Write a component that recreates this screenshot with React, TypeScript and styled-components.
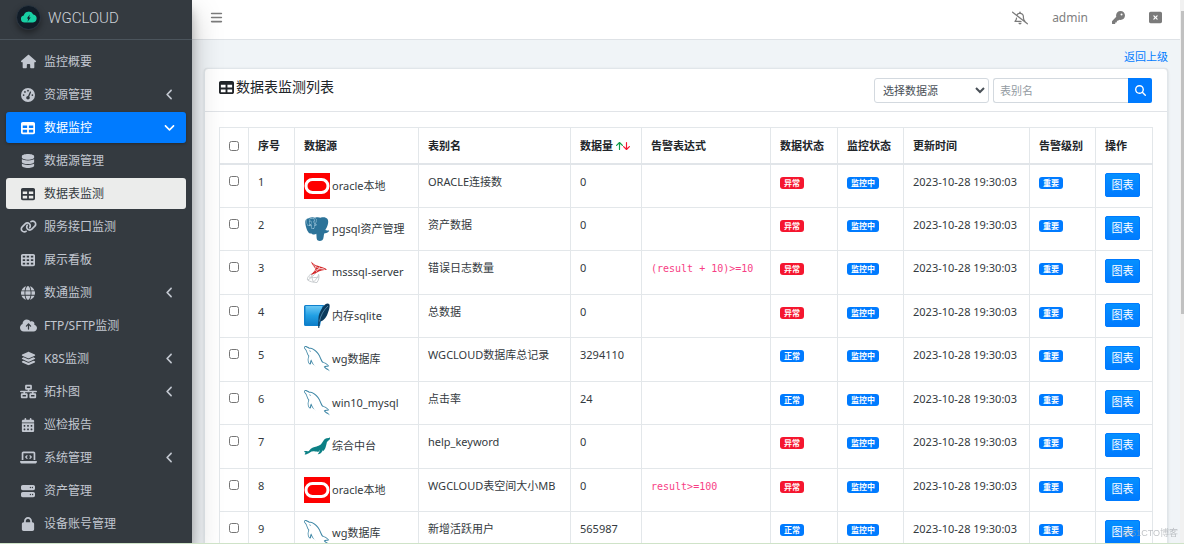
import React from "react";
import styled, { createGlobalStyle, css } from "styled-components";
import type { IconType } from "react-icons";
import {
  FaAngleDown,
  FaAngleLeft,
  FaArrowDown,
  FaArrowUp,
  FaBars,
  FaCalendarDays,
  FaCloudArrowUp,
  FaDatabase,
  FaGaugeHigh,
  FaGlobe,
  FaHouse,
  FaKey,
  FaLaptopCode,
  FaLayerGroup,
  FaLink,
  FaLock,
  FaMagnifyingGlass,
  FaNetworkWired,
  FaRectangleXmark,
  FaRegBellSlash,
  FaServer,
  FaTable,
  FaTableCells,
} from "react-icons/fa6";
import { SiMariadb, SiPostgresql } from "react-icons/si";
import { GrMysql } from "react-icons/gr";

const GlobalStyle = createGlobalStyle`
  *, *::before, *::after { box-sizing: border-box; }
  body {
    margin: 0;
    background: #f0f4f7;
    color: #343a40;
    font-family: "Noto Sans", "Noto Sans CJK SC", sans-serif;
    font-size: 11px;
    line-height: 18px;
  }
  button, input, select { font: inherit; }
  a { color: #007bff; text-decoration: none; }
`;

/* ---------- page frame ---------- */

const Page = styled.div`
  display: grid;
  grid-template-columns: 192px minmax(0, 1fr) 4px;
  grid-template-rows: minmax(0, 1fr) 1px;
  height: 100vh;
  overflow: hidden;
`;

const StatusLine = styled.div`
  grid-column: 1 / -1;
  z-index: 2;
  background: #cfe3c8;
`;

const ScrollTrack = styled.div`
  background: #f1f1f1;
  padding: 11px 0 0 1px;
`;

const ScrollThumb = styled.div`
  height: 57%;
  background: #c1c1c1;
`;

/* ---------- sidebar ---------- */

const Sidebar = styled.aside`
  position: relative;
  z-index: 1;
  overflow: clip;
  overflow-clip-margin: 40px;
  background: #343a40;
  color: #c2c7d0;
  box-shadow: 0 14px 28px rgba(0, 0, 0, 0.25), 0 10px 10px rgba(0, 0, 0, 0.22);
`;

const Brand = styled.a`
  display: flex;
  align-items: center;
  gap: 7px;
  height: 40px;
  padding: 0 16px 4px;
  border-bottom: 1px solid #4b545c;
  color: #ced2d8;
  font-family: Roboto, sans-serif;
  font-size: 15px;
  font-weight: 300;
`;

const BrandMark = styled.svg`
  flex: none;
  border-radius: 50%;
  box-shadow: 0 3px 6px rgba(0, 0, 0, 0.4);
`;

const Menu = styled.ul`
  display: flex;
  flex-direction: column;
  gap: 2px;
  margin: 0;
  padding: 6px;
  list-style: none;
`;

type Tone = "plain" | "active" | "current";

const tones = {
  plain: css`
    color: #c2c7d0;
  `,
  active: css`
    background: #007bff;
    color: #fff;
    box-shadow: 0 1px 3px rgba(0, 0, 0, 0.3);
  `,
  current: css`
    background: #ebeceb;
    color: #343a40;
  `,
};

const MenuLink = styled.a<{ $tone: Tone }>`
  display: grid;
  grid-template-columns: 18px 1fr 12px;
  align-items: center;
  gap: 7px;
  height: 31px;
  padding: 0 11px 0 13px;
  border-radius: 3px;
  font-size: 12px;
  ${({ $tone }) => tones[$tone]}

  & > svg {
    justify-self: center;
  }
`;

/* ---------- main column ---------- */

const Main = styled.main`
  min-width: 0;
  overflow: hidden;
`;

const TopBar = styled.header`
  display: flex;
  align-items: center;
  justify-content: space-between;
  height: 40px;
  padding: 0 18px 4px;
  border-bottom: 1px solid #dee2e6;
  background: #fff;
  color: #808080;
  font-size: 12px;
`;

const TopActions = styled.div`
  display: flex;
  align-items: center;
  gap: 24px;
`;

const IconButton = styled.button`
  display: flex;
  padding: 0;
  border: 0;
  background: none;
  color: #7b7b7b;
`;

const Content = styled.div`
  padding: 8px 12px;
`;

const BackRow = styled.div`
  display: flex;
  justify-content: flex-end;
  padding-bottom: 2px;
`;

const Card = styled.section`
  border: 1px solid #e1e6ea;
  border-radius: 4px;
  background: #fff;
  box-shadow: 0 0 1px rgba(0, 0, 0, 0.1), 0 1px 3px rgba(0, 0, 0, 0.1);
`;

const CardHeader = styled.div`
  display: flex;
  align-items: flex-start;
  justify-content: space-between;
  padding: 9px 15px 8px 14px;
  border-bottom: 1px solid #e1e4e8;
`;

const CardTitle = styled.h1`
  display: flex;
  align-items: center;
  gap: 2px;
  margin: 0;
  color: #212529;
  font-size: 14px;
  font-weight: 400;
`;

const Filters = styled.form`
  display: flex;
  gap: 4px;
`;

const SourceSelect = styled.select`
  width: 115px;
  height: 25px;
  padding: 0 0 0 4px;
  border: 1px solid #d3d9df;
  border-radius: 3px;
  background: #fff;
  color: #495057;
`;

const SearchGroup = styled.div`
  display: flex;
`;

const SearchInput = styled.input`
  width: 135px;
  height: 25px;
  padding: 0 6px;
  border: 1px solid #d3d9df;
  border-right: 0;
  border-radius: 3px 0 0 3px;
  color: #495057;

  &::placeholder {
    color: #939ba2;
  }
`;

const SearchButton = styled.button`
  display: grid;
  place-items: center;
  width: 24px;
  height: 25px;
  padding: 0;
  border: 0;
  border-radius: 0 2px 2px 0;
  background: #007bff;
  color: #fff;
`;

const CardBody = styled.div`
  padding: 15px 16px 15px 14px;
`;

/* ---------- table ---------- */

const DataTable = styled.table`
  width: 100%;
  table-layout: fixed;
  border-collapse: collapse;
  white-space: nowrap;
`;

const HeadCell = styled.th`
  height: 36px;
  padding: 2px 9px 0;
  border: 1px solid #e3e7ea;
  border-bottom: 2px solid #e1e5e9;
  color: #212529;
  font-weight: 700;
  text-align: left;
`;

const BodyRow = styled.tr`
  height: 43px;

  &:nth-child(odd) {
    height: 44px;
  }
`;

const Cell = styled.td`
  padding: 8px 9px;
  border: 1px solid #e3e7ea;
  vertical-align: top;
`;

const Tick = styled.input`
  display: block;
  width: 10px;
  height: 10px;
  margin: 3px 0;
`;

const SortLabel = styled.span`
  display: inline-flex;
  align-items: center;
  gap: 3px;
`;

const SortArrows = styled.span`
  display: inline-flex;

  & > svg {
    width: 7px;
    height: 10px;
  }
`;

const Source = styled.span`
  display: flex;
  align-items: center;
  gap: 2px;

  & > svg {
    flex: none;
  }
`;

const Expression = styled.code`
  color: #f73e85;
  font-family: "DejaVu Sans Mono", monospace;
  font-size: 10px;
`;

const Badge = styled.span<{ $danger?: boolean }>`
  display: inline-block;
  padding: 0 4px;
  border-radius: 3px;
  background: ${({ $danger }) => ($danger ? "#f5162f" : "#007bff")};
  color: #fff;
  font-size: 8px;
  font-weight: 700;
  line-height: 12px;
  vertical-align: middle;
`;

const ChartButton = styled.button`
  display: block;
  width: 35px;
  height: 24px;
  padding: 0;
  border: 1px solid #007bff;
  border-radius: 2px;
  background: linear-gradient(#0590ff, #007bff);
  color: #fff;
`;

const Watermark = styled.span`
  position: fixed;
  right: 6px;
  bottom: 2px;
  z-index: 2;
  color: rgba(150, 155, 160, 0.6);
  font-family: "Liberation Sans", "Noto Sans CJK SC", sans-serif;
  font-size: 9px;
`;

/* ---------- database logos ---------- */

const OracleLogo = () => (
  <svg width="26" height="26" viewBox="0 0 26 26" aria-hidden="true">
    <path fill="#fe0000" d="M0 0h26v26H0z" />
    <rect x="2" y="6.500" width="22" height="13" rx="6.500" fill="none" stroke="#fff" strokeWidth="3" />
  </svg>
);

const PostgresLogo = () => (
  <svg width="26" height="26" viewBox="0 0 26 26" aria-hidden="true">
    <path
      fill="#2c7399"
      d="M5 2C8 .6 10 1.400 11 1.700c2-.7 4-.6 5.500 0C19 .9 22 1 23.500 3c1.800 3-.2 8-2.200 11 1.200.6 3 .4 3.700.2.6 1.200-2 3.200-4.800 3.200-.7 2-.2 5.400-2 6.800-1.600 1.200-4.700 1.200-5.400-1.200-.4-1.600-.2-3.600-.5-5.200-1.300 1-4.300.8-5.200-.6-1.200.6-2.300.2-3.200-1.600C2 12 .3 5.500 2 3.500 2.800 2.600 4 2.300 5 2z"
    />
    <SiPostgresql x="2" y="2" width="22" height="22" fill="#c4e2f0" />
  </svg>
);

const MssqlLogo = () => (
  <svg width="26" height="26" viewBox="0 0 26 26" aria-hidden="true">
    <g fill="none" stroke="#c9cdd0" strokeWidth="1">
      <path d="M8 14.500c-3 1.500-5 4-4.500 6.500 2 1.500 6 2.500 9.500 2.500 2-3 2.500-6 1.500-8.500" />
      <path d="M5 18c3 .5 6 1 10 0M8 15c-.5 3 0 5 1.500 8M12 14c-2 2-5 5-8 7M14.500 16c-1 3-3 5-5 7" />
    </g>
    <path
      fill="#d42a2c"
      d="M7 2.500c2.500 3 5 3.800 8.500 4.700 3 .8 6 1.800 7.500 3.500-3.500.2-7 1-10 2.700-2 1.100-4.500 2.300-6.300 2.300 2-1.700 3.800-3.700 4.600-5.700C10.500 7.500 7.500 5.500 7 2.500z"
    />
    <path
      fill="none"
      stroke="#fff"
      strokeWidth="0.600"
      d="M9 5.500c2 2 5 4 12 5M12 6.500c-.5 3-2 5.500-4.500 8M16 7.500c-.5 1.500-2 3-4 5.500M10.500 12c2-1.500 5-2.500 9-2.500"
    />
  </svg>
);

const SqliteLogo = () => (
  <svg width="26" height="26" viewBox="0 0 26 26" aria-hidden="true">
    <defs>
      <linearGradient id="sqlite-page" x1="0" y1="0" x2="0" y2="1">
        <stop offset="0" stopColor="#6cc8f4" />
        <stop offset="0.500" stopColor="#22a0e4" />
        <stop offset="1" stopColor="#0d7fc9" />
      </linearGradient>
    </defs>
    <path fill="#0f80cc" d="M1.500 2H20l-4 21H1.500A1.500 1.500 0 0 1 0 21.500v-18A1.500 1.500 0 0 1 1.500 2z" />
    <path fill="url(#sqlite-page)" d="M1.500 3h17l-4 19h-13z" />
    <path
      fill="#0b3a5c"
      d="M25.300 1.200c-1.600-1.700-4.600-.2-7 3.600-2.600 4-4.300 8.800-3.800 12.200-.3 2.500-.4 5-.2 8h1c0-2.500.3-4.600.7-6.500 3.300-.5 6-3.500 7.500-7.500 1.500-3.800 2.800-7.800 1.800-9.800z"
    />
    <path fill="none" stroke="#8fc7e6" strokeWidth="0.500" d="M24 3c-4.500 4-7.500 9.500-8.500 15.500" />
  </svg>
);

const MysqlLogo = () => <GrMysql size={26} color="#3f87a6" aria-hidden="true" />;
const MariaLogo = () => <SiMariadb size={26} color="#0c8085" aria-hidden="true" />;

const CloudMark = () => (
  <BrandMark width="25" height="25" viewBox="0 0 25 25" aria-hidden="true">
    <circle cx="12.500" cy="12.500" r="12" fill="#111c27" stroke="#2a3540" />
    <path
      fill="#18cfa4"
      d="M8.500 17.500a3.600 3.600 0 0 1-.8-7.100 5.200 5.200 0 0 1 9.600-1 4.100 4.100 0 0 1-.3 8.100z"
    />
    <path fill="#111c27" d="M13.800 9.500l-3 4h1.500l-.8 3.200 3.200-4.200h-1.600z" />
  </BrandMark>
);

/* ---------- data ---------- */

type MenuItem = { icon: IconType; label: string; size?: number; tone?: Tone; arrow?: "left" | "down" };

const menu: MenuItem[] = [
  { icon: FaHouse, label: "监控概要", size: 15 },
  { icon: FaGaugeHigh, label: "资源管理" , arrow: "left" },
  { icon: FaTable, label: "数据监控", tone: "active", arrow: "down" },
  { icon: FaDatabase, label: "数据源管理" },
  { icon: FaTable, label: "数据表监测", tone: "current" },
  { icon: FaLink, label: "服务接口监测", size: 17 },
  { icon: FaTableCells, label: "展示看板" },
  { icon: FaGlobe, label: "数通监测", arrow: "left" },
  { icon: FaCloudArrowUp, label: "FTP/SFTP监测", size: 17 },
  { icon: FaLayerGroup, label: "K8S监测", size: 15, arrow: "left" },
  { icon: FaNetworkWired, label: "拓扑图", size: 17, arrow: "left" },
  { icon: FaCalendarDays, label: "巡检报告" },
  { icon: FaLaptopCode, label: "系统管理", size: 17, arrow: "left" },
  { icon: FaServer, label: "资产管理" },
  { icon: FaLock, label: "设备账号管理" },
];

const columnWidths = [29, 46, 124, 152, 71, 129, 67, 66, 126, 66, 57];

type Row = { logo: React.FC; source: string; alias: string; count: string; expression?: string; ok?: boolean };

const rows: Row[] = [
  { logo: OracleLogo, source: "oracle本地", alias: "ORACLE连接数", count: "0" },
  { logo: PostgresLogo, source: "pgsql资产管理", alias: "资产数据", count: "0" },
  { logo: MssqlLogo, source: "msssql-server", alias: "错误日志数量", count: "0", expression: "(result + 10)>=10" },
  { logo: SqliteLogo, source: "内存sqlite", alias: "总数据", count: "0" },
  { logo: MysqlLogo, source: "wg数据库", alias: "WGCLOUD数据库总记录", count: "3294110", ok: true },
  { logo: MysqlLogo, source: "win10_mysql", alias: "点击率", count: "24", ok: true },
  { logo: MariaLogo, source: "综合中台", alias: "help_keyword", count: "0" },
  { logo: OracleLogo, source: "oracle本地", alias: "WGCLOUD表空间大小MB", count: "0", expression: "result>=100" },
  { logo: MysqlLogo, source: "wg数据库", alias: "新增活跃用户", count: "565987", ok: true },
];

export default function App() {
  return (
    <Page>
      <GlobalStyle />
      <Sidebar>
        <Brand href="#">
          <CloudMark />
          WGCLOUD
        </Brand>
        <nav>
          <Menu>
            {menu.map(({ icon: Icon, label, size = 14, tone = "plain", arrow }) => (
              <li key={label}>
                <MenuLink href="#" $tone={tone}>
                  <Icon size={size} />
                  <span>{label}</span>
                  {arrow === "left" && <FaAngleLeft size={13} />}
                  {arrow === "down" && <FaAngleDown size={13} />}
                </MenuLink>
              </li>
            ))}
          </Menu>
        </nav>
      </Sidebar>

      <Main>
        <TopBar>
          <IconButton type="button" aria-label="菜单">
            <FaBars size={13} />
          </IconButton>
          <TopActions>
            <IconButton type="button" aria-label="通知">
              <FaRegBellSlash size={16} />
            </IconButton>
            <span>admin</span>
            <IconButton type="button" aria-label="密码">
              <FaKey size={13} />
            </IconButton>
            <IconButton type="button" aria-label="退出">
              <FaRectangleXmark size={13} />
            </IconButton>
          </TopActions>
        </TopBar>

        <Content>
          <BackRow>
            <a href="#">返回上级</a>
          </BackRow>
          <Card>
            <CardHeader>
              <CardTitle>
                <FaTable size={15} />
                数据表监测列表
              </CardTitle>
              <Filters>
                <SourceSelect aria-label="选择数据源">
                  <option>选择数据源</option>
                </SourceSelect>
                <SearchGroup>
                  <SearchInput type="text" placeholder="表别名" aria-label="表别名" />
                  <SearchButton type="button" aria-label="搜索">
                    <FaMagnifyingGlass size={11} />
                  </SearchButton>
                </SearchGroup>
              </Filters>
            </CardHeader>
            <CardBody>
              <DataTable>
                <colgroup>
                  {columnWidths.map((width, i) => (
                    <col key={i} width={width} />
                  ))}
                </colgroup>
                <thead>
                  <tr>
                    <HeadCell>
                      <Tick type="checkbox" aria-label="全选" />
                    </HeadCell>
                    <HeadCell>序号</HeadCell>
                    <HeadCell>数据源</HeadCell>
                    <HeadCell>表别名</HeadCell>
                    <HeadCell>
                      <SortLabel>
                        数据量
                        <SortArrows>
                          <FaArrowUp color="#0f9d4a" />
                          <FaArrowDown color="#f5162f" />
                        </SortArrows>
                      </SortLabel>
                    </HeadCell>
                    <HeadCell>告警表达式</HeadCell>
                    <HeadCell>数据状态</HeadCell>
                    <HeadCell>监控状态</HeadCell>
                    <HeadCell>更新时间</HeadCell>
                    <HeadCell>告警级别</HeadCell>
                    <HeadCell>操作</HeadCell>
                  </tr>
                </thead>
                <tbody>
                  {rows.map(({ logo: Logo, source, alias, count, expression, ok }, i) => (
                    <BodyRow key={i}>
                      <Cell>
                        <Tick type="checkbox" aria-label={`选择 ${i + 1}`} />
                      </Cell>
                      <Cell>{i + 1}</Cell>
                      <Cell>
                        <Source>
                          <Logo />
                          {source}
                        </Source>
                      </Cell>
                      <Cell>{alias}</Cell>
                      <Cell>{count}</Cell>
                      <Cell>{expression && <Expression>{expression}</Expression>}</Cell>
                      <Cell>
                        <Badge $danger={!ok}>{ok ? "正常" : "异常"}</Badge>
                      </Cell>
                      <Cell>
                        <Badge>监控中</Badge>
                      </Cell>
                      <Cell>2023-10-28 19:30:03</Cell>
                      <Cell>
                        <Badge>重要</Badge>
                      </Cell>
                      <Cell>
                        <ChartButton type="button">图表</ChartButton>
                      </Cell>
                    </BodyRow>
                  ))}
                </tbody>
              </DataTable>
            </CardBody>
          </Card>
        </Content>
      </Main>

      <ScrollTrack>
        <ScrollThumb />
      </ScrollTrack>
      <StatusLine />
      <Watermark>@51CTO博客</Watermark>
    </Page>
  );
}
